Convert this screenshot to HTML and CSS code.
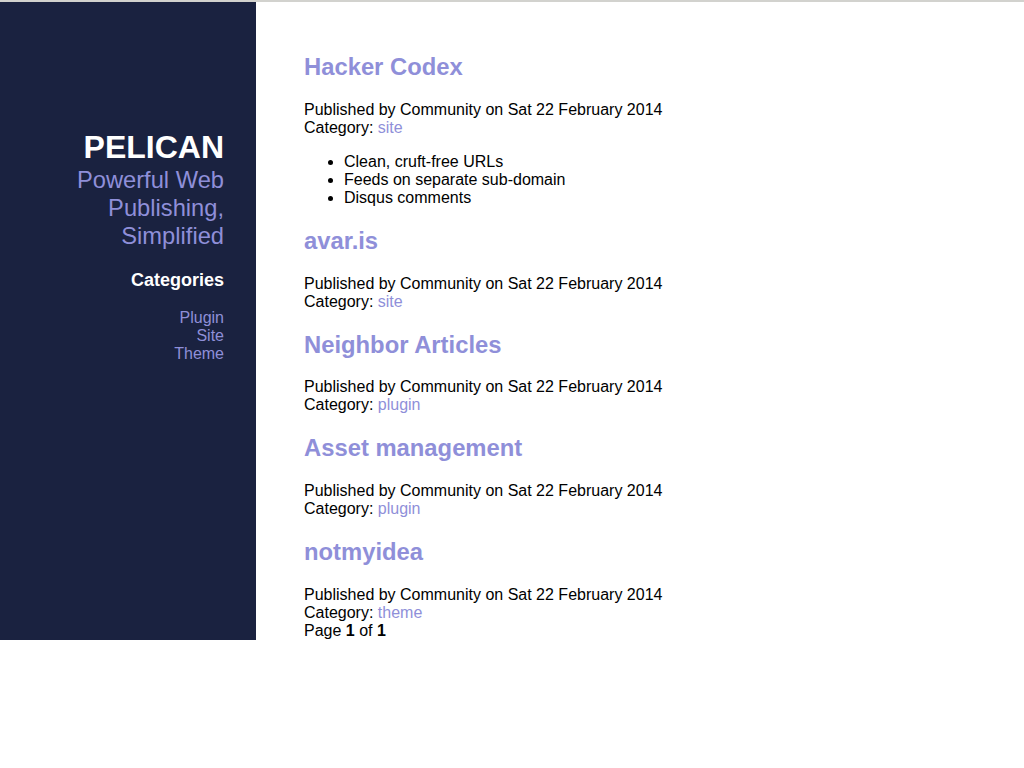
FILE: index.html
```html
<!DOCTYPE html>
<html>
<head>
<meta charset="utf-8">
<title>Pelican</title>
<link rel="stylesheet" href="styles.css">
</head>
<body>
<div class="page">
  <aside class="sidebar">
    <h1 class="site-title">PELICAN</h1>
    <p class="tagline">Powerful Web Publishing, Simplified</p>
    <h3 class="cat-title">Categories</h3>
    <ul class="cat-list">
      <li><a href="#">Plugin</a></li>
      <li><a href="#">Site</a></li>
      <li><a href="#">Theme</a></li>
    </ul>
  </aside>
  <main class="content">
    <article class="post">
      <h2 class="post-title"><a href="#">Hacker Codex</a></h2>
      <div class="meta">Published by Community on Sat 22 February 2014<br>Category: <a href="#">site</a></div>
      <ul class="summary">
        <li>Clean, cruft-free URLs</li>
        <li>Feeds on separate sub-domain</li>
        <li>Disqus comments</li>
      </ul>
    </article>
    <article class="post">
      <h2 class="post-title"><a href="#">avar.is</a></h2>
      <div class="meta">Published by Community on Sat 22 February 2014<br>Category: <a href="#">site</a></div>
    </article>
    <article class="post">
      <h2 class="post-title"><a href="#">Neighbor Articles</a></h2>
      <div class="meta">Published by Community on Sat 22 February 2014<br>Category: <a href="#">plugin</a></div>
    </article>
    <article class="post">
      <h2 class="post-title"><a href="#">Asset management</a></h2>
      <div class="meta">Published by Community on Sat 22 February 2014<br>Category: <a href="#">plugin</a></div>
    </article>
    <article class="post last">
      <h2 class="post-title"><a href="#">notmyidea</a></h2>
      <div class="meta">Published by Community on Sat 22 February 2014<br>Category: <a href="#">theme</a></div>
    </article>
    <div class="pager">Page <b>1</b> of <b>1</b></div>
  </main>
</div>
</body>
</html>
```

FILE: styles.css
```css
html, body {
  margin: 0;
  padding: 0;
  background: #ffffff;
}
body {
  border-top: 2px solid #d2d2ce;
  font-family: "Liberation Sans", Arial, sans-serif;
  font-size: 16px;
  color: #000000;
}
a {
  color: #8f8fd9;
  text-decoration: none;
}
.page {
  display: flex;
  align-items: stretch;
}
.sidebar {
  width: 192px;
  flex: none;
  background: #1a2240;
  padding: 127px 32px 0 32px;
  text-align: right;
}
.site-title {
  margin: 0;
  font-size: 32px;
  font-weight: bold;
  color: #ffffff;
  line-height: 37px;
}
.tagline {
  margin: 0;
  font-size: 23.7px;
  line-height: 28px;
  color: #8f8fd9;
}
.cat-title {
  margin: 20px 0 18px;
  font-size: 18px;
  line-height: 21px;
  color: #ffffff;
}
.cat-list {
  list-style: none;
  margin: 0;
  padding: 0;
  line-height: 18px;
}
.content {
  padding: 31px 0 0 48px;
  flex: 1;
}
.post-title {
  font-size: 23.8px;
  margin: 20px 0;
  line-height: 27.8px;
}
.post-title a {
  color: #8f8fd9;
}
.meta {
  line-height: 18px;
}
.summary {
  margin: 16px 0 0;
  padding-left: 40px;
  line-height: 18px;
}
.pager {
  line-height: 18px;
}
.pager b {
  font-weight: bold;
}
```
